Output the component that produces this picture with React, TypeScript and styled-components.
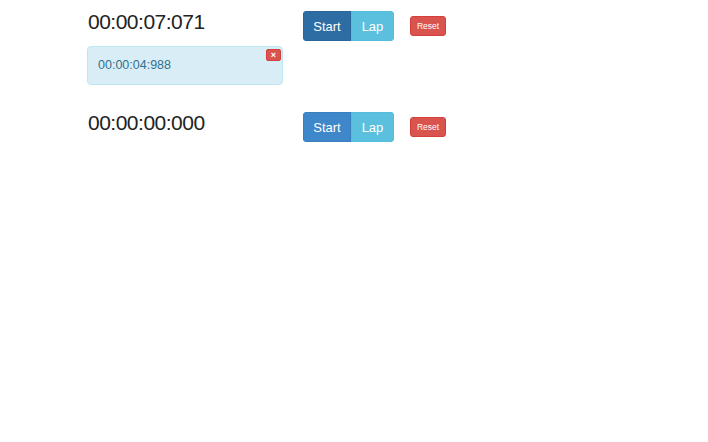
import React from "react";
import styled, { createGlobalStyle } from "styled-components";

const Global = createGlobalStyle`
  html, body { margin: 0; padding: 0; background: #fff; }
  body { font-family: "Liberation Sans", Arial, sans-serif; color: #333; }
  * { box-sizing: border-box; }
`;

const Page = styled.div`
  padding: 11px 0 0 87px;
  display: flex;
  flex-direction: column;
`;

const Timer = styled.section<{ $gap: number }>`
  display: flex;
  flex-direction: column;
  margin-bottom: ${(p) => p.$gap}px;
`;

const Row = styled.div`
  display: flex;
  align-items: flex-start;
`;

const Time = styled.div`
  width: 216px;
  padding-left: 1px;
  font-size: 21px;
  letter-spacing: -0.5px;
  line-height: 22px;
  color: #222;
`;

const Group = styled.div`
  display: flex;
  border-radius: 4px;
  overflow: hidden;
`;

const Btn = styled.button<{ $bg: string; $border: string; $w: number }>`
  width: ${(p) => p.$w}px;
  height: 30px;
  padding: 0;
  font-family: inherit;
  font-size: 13px;
  color: #fff;
  background: ${(p) => p.$bg};
  border: 1px solid ${(p) => p.$border};
  margin: 0;
  cursor: pointer;
`;

const ResetBtn = styled.button`
  margin-left: 16px;
  margin-top: 5px;
  width: 36px;
  height: 20px;
  padding: 0;
  font-family: inherit;
  font-size: 8.5px;
  color: #fff;
  background: #d9534f;
  border: 1px solid #d43f3a;
  border-radius: 3px;
`;

const Lap = styled.div`
  position: relative;
  margin-top: 5px;
  width: 196px;
  padding: 10px 10px;
  font-size: 12.5px;
  line-height: 17px;
  color: #31708f;
  background: #d9edf7;
  border: 1px solid #bce8f1;
  border-radius: 4px;
`;

const Close = styled.button`
  position: absolute;
  top: 2px;
  right: 1px;
  width: 15px;
  height: 12px;
  padding: 0;
  font-family: inherit;
  font-size: 9px;
  line-height: 10px;
  font-weight: bold;
  color: #fff;
  background: #d9534f;
  border: 1px solid #d43f3a;
  border-radius: 2px;
`;

type TimerData = { time: string; active: boolean; laps: string[] };

const timers: TimerData[] = [
  { time: "00:00:07:071", active: true, laps: ["00:00:04:988"] },
  { time: "00:00:00:000", active: false, laps: [] },
];

export default function App() {
  return (
    <>
      <Global />
      <Page>
        {timers.map((t, i) => (
          <Timer key={i} $gap={i === 0 ? 27 : 0}>
            <Row>
              <Time>{t.time}</Time>
              <Group>
                <Btn
                  $w={48}
                  $bg={t.active ? "#2e6da4" : "#3f87cb"}
                  $border={t.active ? "#2a659a" : "#3a80c0"}
                >
                  Start
                </Btn>
                <Btn $w={43} $bg="#5bc0de" $border="#54bcdc">
                  Lap
                </Btn>
              </Group>
              <ResetBtn>Reset</ResetBtn>
            </Row>
            {t.laps.map((l, j) => (
              <Lap key={j}>
                {l}
                <Close>×</Close>
              </Lap>
            ))}
          </Timer>
        ))}
      </Page>
    </>
  );
}
